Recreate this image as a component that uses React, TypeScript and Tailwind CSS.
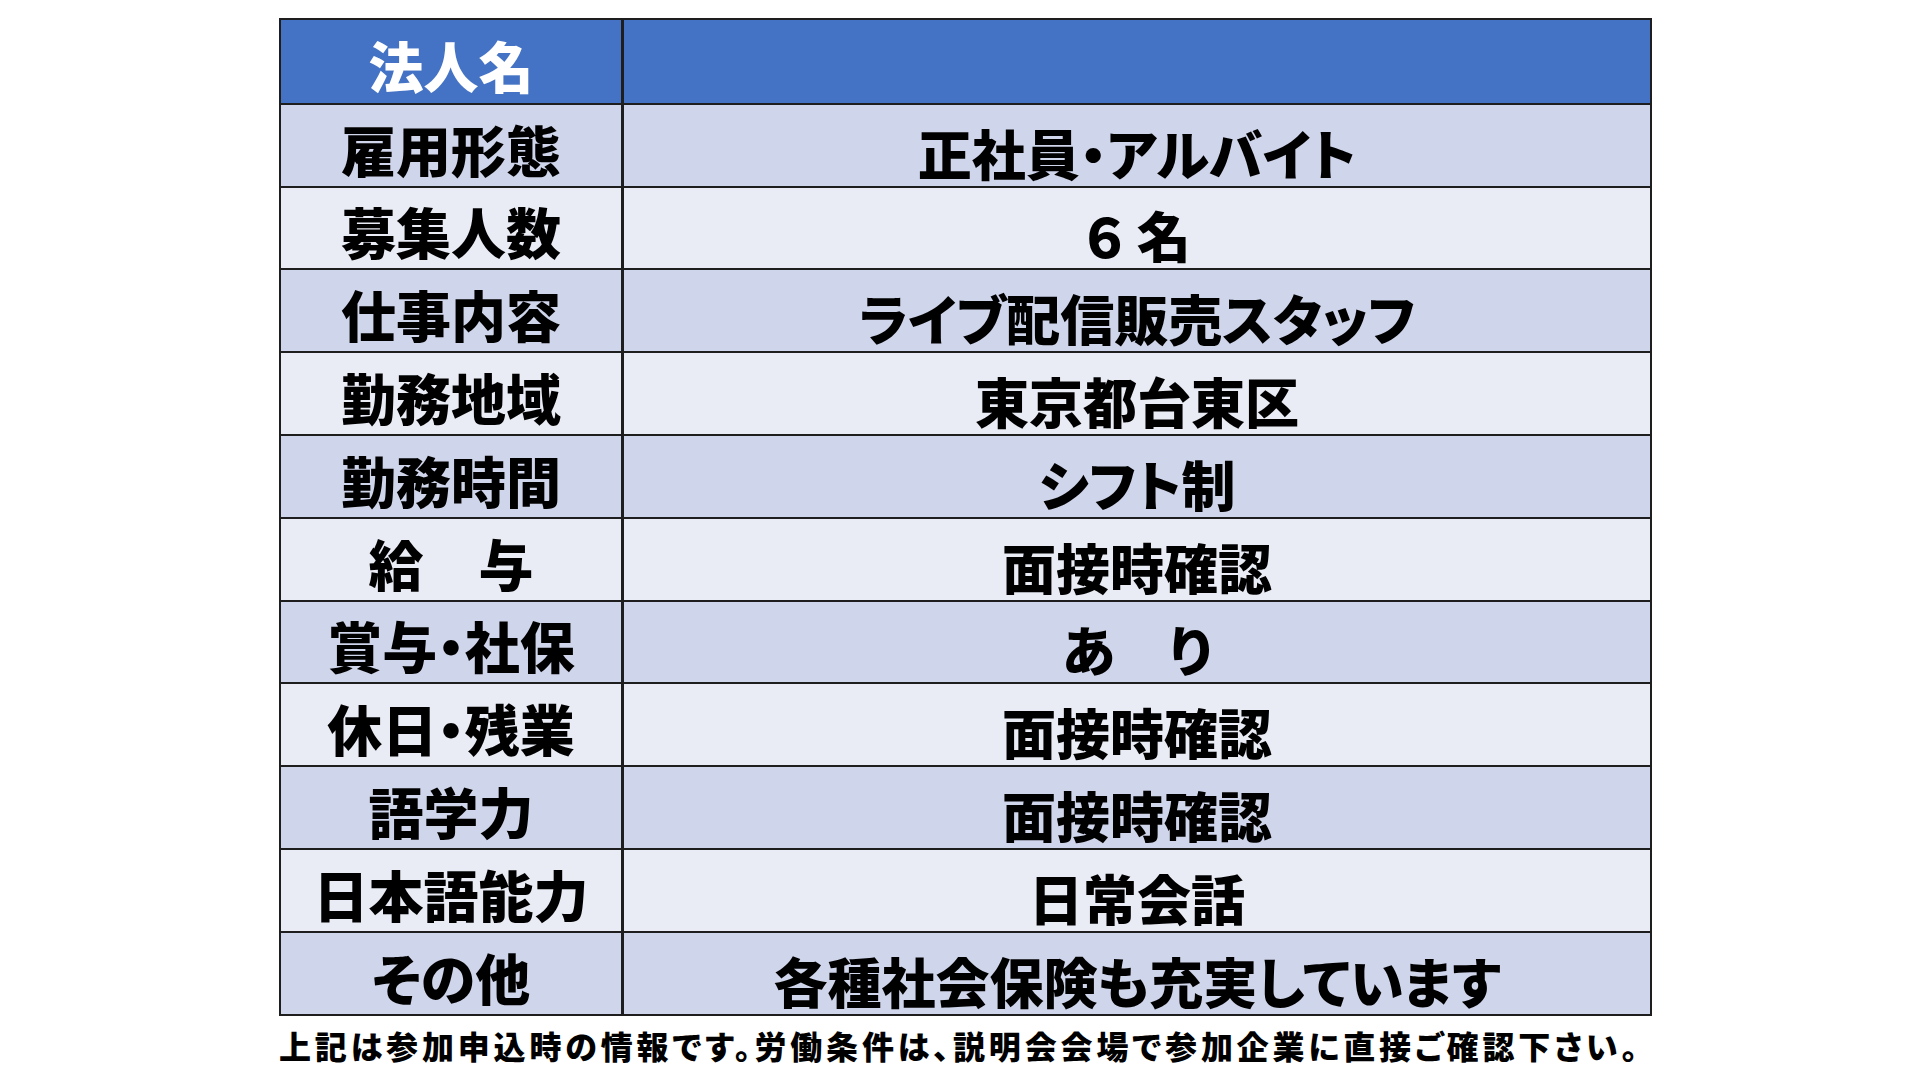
import React from "react";

const rows: { label: string; value: string; head?: boolean }[] = [
  { label: "法人名", value: "", head: true },
  { label: "雇用形態", value: "正社員・アルバイト" },
  { label: "募集人数", value: "６ 名" },
  { label: "仕事内容", value: "ライブ配信販売スタッフ" },
  { label: "勤務地域", value: "東京都台東区" },
  { label: "勤務時間", value: "シフト制" },
  { label: "給　与", value: "面接時確認" },
  { label: "賞与・社保", value: "あ　り" },
  { label: "休日・残業", value: "面接時確認" },
  { label: "語学力", value: "面接時確認" },
  { label: "日本語能力", value: "日常会話" },
  { label: "その他", value: "各種社会保険も充実しています" },
];

export default function App() {
  return (
    <div className="w-[1920px] h-[1080px] bg-white overflow-hidden pl-[279px] pt-[18px] font-['Noto_Sans_CJK_JP',sans-serif]">
      <div className="w-[1373px] border-2 border-[#1e1e1e] flex flex-col">
        {rows.map((r, i) => {
          const bg = r.head
            ? "bg-[#4472c4]"
            : i % 2 === 1
            ? "bg-[#cfd5ea]"
            : "bg-[#e9ebf5]";
          return (
            <div
              key={i}
              className={`flex h-[82.8px] ${bg} ${i > 0 ? "border-t-2 border-[#1e1e1e]" : ""}`}
            >
              <div
                className={`w-[343px] shrink-0 border-r-[3px] border-[#1e1e1e] flex items-center justify-center pt-[6px] text-[55px] font-black leading-none [font-feature-settings:'palt'] ${
                  r.head ? "text-white" : "text-black"
                }`}
              >
                {r.label}
              </div>
              <div className="flex-1 flex items-center justify-center pt-[15px] text-[54px] font-black leading-none text-black [font-feature-settings:'palt']">
                {r.value}
              </div>
            </div>
          );
        })}
      </div>
      <div className="mt-[13px] text-[32px] font-black leading-none text-black tracking-[0.12em] whitespace-nowrap [font-feature-settings:'palt']">
        上記は参加申込時の情報です。労働条件は、説明会会場で参加企業に直接ご確認下さい。
      </div>
    </div>
  );
}
